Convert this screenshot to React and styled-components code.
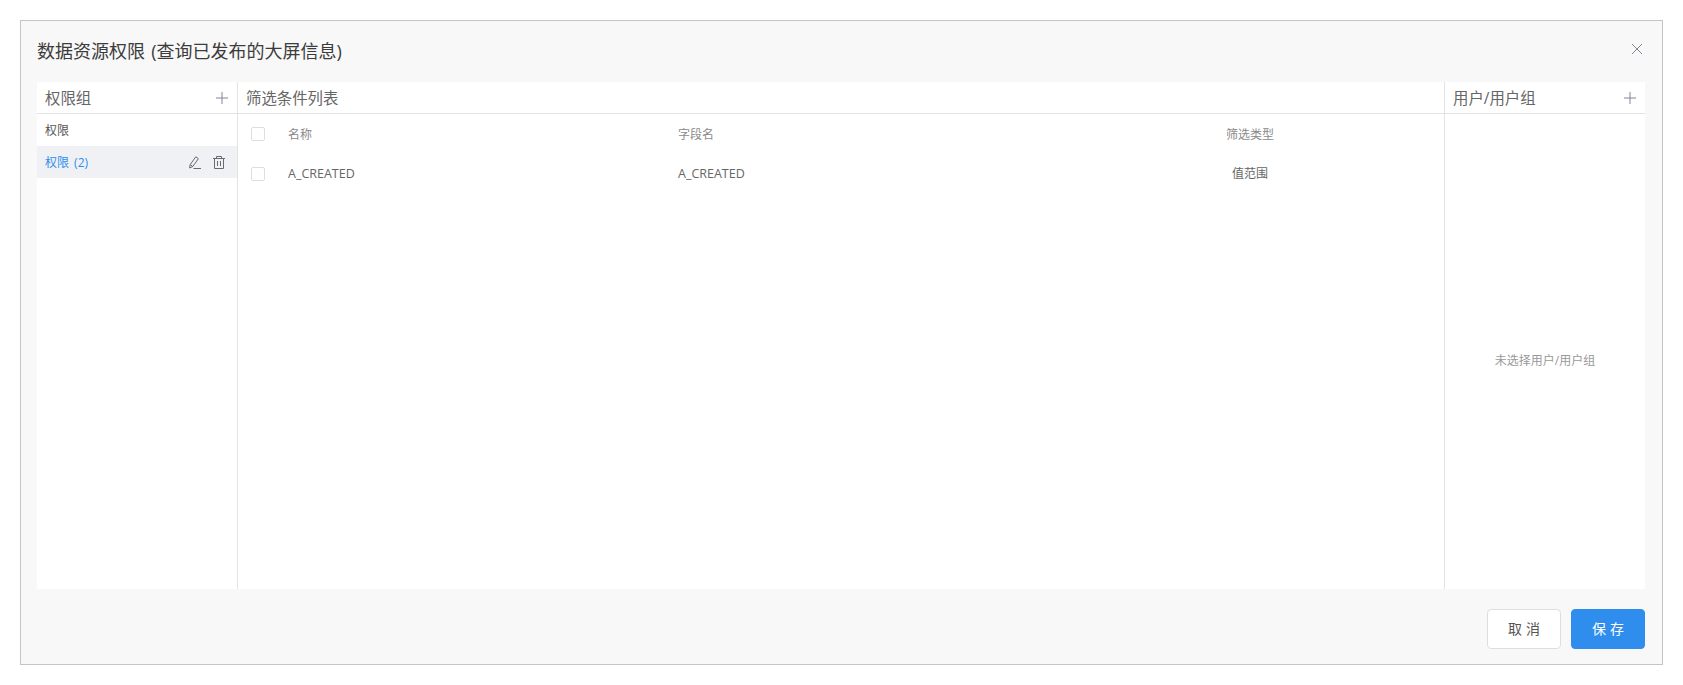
import React from 'react';
import styled, { createGlobalStyle } from 'styled-components';

const Global = createGlobalStyle`
  html, body { margin: 0; padding: 0; background: #fff; }
  body { font-family: "Open Sans", "Noto Sans CJK SC", sans-serif; }
  * { box-sizing: border-box; }
`;

const Page = styled.div`
  width: 1683px;
  height: 685px;
  padding: 20px;
`;

const Modal = styled.div`
  width: 1643px;
  height: 645px;
  background: #f8f8f8;
  border: 1px solid #c4c4c4;
  padding: 0 17px 15px 16px;
  display: flex;
  flex-direction: column;
`;

const ModalHeader = styled.div`
  height: 61px;
  padding-bottom: 4px;
  display: flex;
  align-items: center;
  justify-content: space-between;
`;

const Title = styled.div`
  font-size: 18px;
  word-spacing: 1.5px;
  color: #3c3c3c;
`;

const CloseButton = styled.svg`
  width: 10px;
  height: 10px;
  margin: -2px 3px 0 0;
  stroke: #7f8794;
  stroke-width: 1;
  fill: none;
`;

const Panel = styled.div`
  width: 1608px;
  height: 507px;
  background: #fff;
  display: flex;
`;

const Column = styled.div`
  width: ${p => p.$w || 'auto'};
  flex: ${p => (p.$grow ? 1 : 'none')};
  border-right: ${p => (p.$divider ? '1px solid #e3e3e3' : 'none')};
  display: flex;
  flex-direction: column;
`;

const ColumnHeader = styled.div`
  height: 32px;
  flex: none;
  border-bottom: 1px solid #e3e3e3;
  padding: 0 9px 0 8px;
  display: flex;
  align-items: center;
  justify-content: space-between;
  font-size: 15.4px;
  color: #666;
`;

const PlusIcon = styled.svg`
  width: 12px;
  height: 12px;
  stroke: #7e8794;
  stroke-width: 1;
  fill: none;
`;

const GroupRow = styled.div`
  height: 32px;
  padding: 0 12px 0 8px;
  display: flex;
  align-items: center;
  justify-content: space-between;
  font-size: 12px;
  word-spacing: 2px;
  color: ${p => (p.$active ? '#2f8eed' : '#555')};
  background: ${p => (p.$active ? '#f0f1f5' : 'transparent')};
`;

const RowActions = styled.div`
  display: flex;
  align-items: center;
  gap: 12px;
`;

const ActionIcon = styled.svg`
  width: 12px;
  height: 13px;
  stroke: #666b75;
  stroke-width: 1;
  fill: none;
`;

const TableHead = styled.div`
  height: 40px;
  display: grid;
  grid-template-columns: 37px 390px 1fr 150px;
  align-items: center;
  font-size: 12px;
  color: #8a8a8a;
  padding: 0 119px 0 13px;
`;

const TableRow = styled(TableHead)`
  font-size: 12.5px;
  color: #666;
  & > div {
    margin-top: -2px;
  }
`;

const Check = styled.span`
  display: block;
  width: 14px;
  height: 14px;
  background: #fff;
  border: 1px solid #dcdee5;
  border-radius: 2px;
`;

const CenterCell = styled.div`
  justify-self: center;
  font-size: 12px;
`;

const EmptyBody = styled.div`
  flex: 1;
  display: flex;
  align-items: center;
  justify-content: center;
  padding-top: 16px;
  font-size: 12px;
  color: #999;
`;

const Footer = styled.div`
  flex: 1;
  display: flex;
  justify-content: flex-end;
  align-items: flex-end;
  gap: 10px;
`;

const Button = styled.button`
  width: 74px;
  height: 40px;
  border-radius: 4px;
  border: 1px solid ${p => (p.$primary ? '#2f8eed' : '#dcdee5')};
  background: ${p => (p.$primary ? '#2f8eed' : '#fff')};
  color: ${p => (p.$primary ? '#fff' : '#555')};
  font-family: inherit;
  font-size: 14px;
  letter-spacing: 4px;
  padding: 0 0 2px 4px;
`;

const Plus = () => (
  <PlusIcon viewBox="0 0 12 12"><path d="M6 0v12M0 6h12" /></PlusIcon>
);

export default function App() {
  return (
    <Page>
      <Global />
      <Modal>
        <ModalHeader>
          <Title>数据资源权限 (查询已发布的大屏信息)</Title>
          <CloseButton viewBox="0 0 10 10"><path d="M0 0l10 10M10 0L0 10" /></CloseButton>
        </ModalHeader>
        <Panel>
          <Column $w="201px" $divider>
            <ColumnHeader>权限组<Plus /></ColumnHeader>
            <GroupRow><span>权限</span></GroupRow>
            <GroupRow $active>
              <span>权限 (2)</span>
              <RowActions>
                <ActionIcon viewBox="0 0 12 13">
                  <path d="M0.6 12L1.2 8.6 6.8 0.8l2.6 1.9L3.8 10.5zM1.2 8.6l2.6 1.9M4.5 12.5H12" />
                </ActionIcon>
                <ActionIcon viewBox="0 0 12 13">
                  <path d="M0 2.5h12M3.5 2.5v-2h5v2M1.5 2.5v10h9v-10M4.5 5v5M7.5 5v5" />
                </ActionIcon>
              </RowActions>
            </GroupRow>
          </Column>
          <Column $grow $divider>
            <ColumnHeader>筛选条件列表</ColumnHeader>
            <TableHead>
              <Check />
              <div>名称</div>
              <div>字段名</div>
              <CenterCell>筛选类型</CenterCell>
            </TableHead>
            <TableRow>
              <Check />
              <div>A_CREATED</div>
              <div>A_CREATED</div>
              <CenterCell>值范围</CenterCell>
            </TableRow>
          </Column>
          <Column $w="200px">
            <ColumnHeader>用户/用户组<Plus /></ColumnHeader>
            <EmptyBody>未选择用户/用户组</EmptyBody>
          </Column>
        </Panel>
        <Footer>
          <Button>取消</Button>
          <Button $primary>保存</Button>
        </Footer>
      </Modal>
    </Page>
  );
}
